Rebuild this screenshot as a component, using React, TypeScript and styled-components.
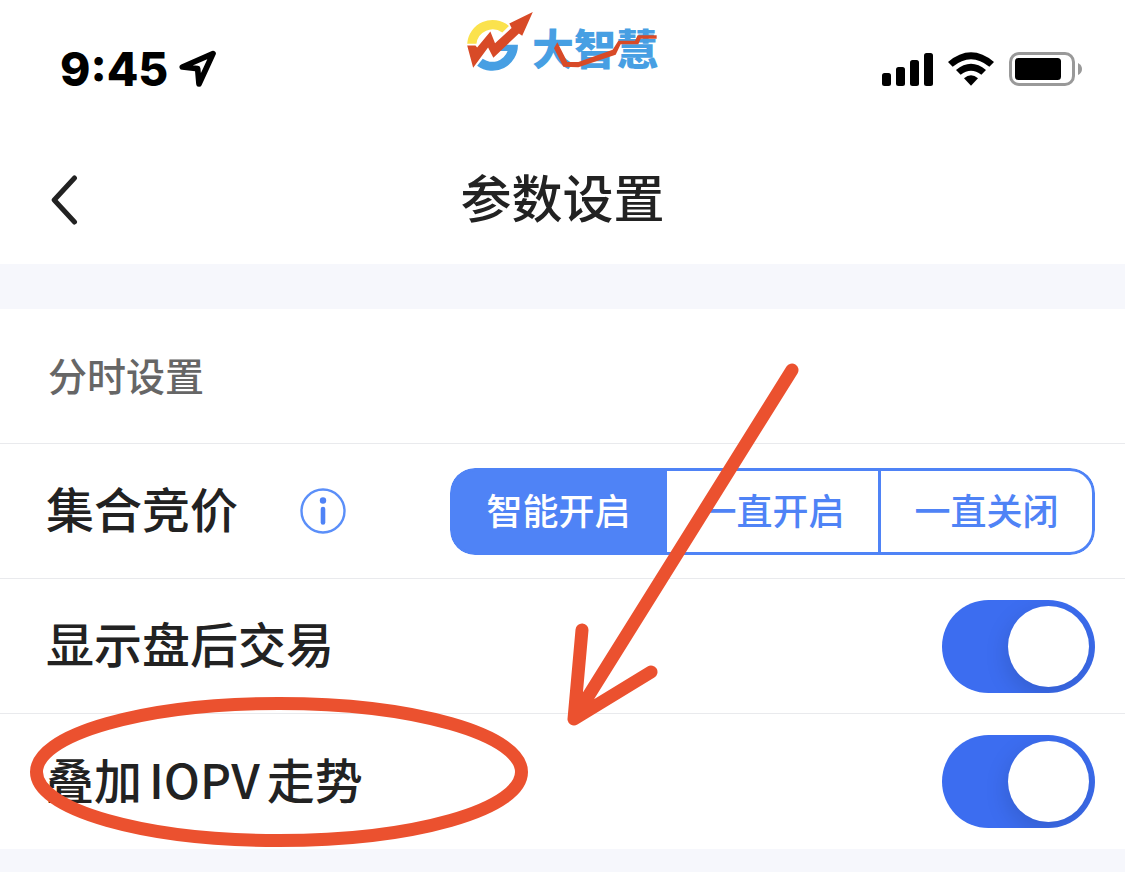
import React, { useState } from 'react';
import styled, { createGlobalStyle } from 'styled-components';

const GlobalStyle = createGlobalStyle`
  *, *::before, *::after { box-sizing: border-box; }
  body {
    margin: 0;
    background: #f6f7fc;
    color: #222;
    font-family: Inter, 'Noto Sans CJK SC', sans-serif;
  }
  button { margin: 0; padding: 0; border: 0; background: none; font: inherit; color: inherit; cursor: pointer; }
  svg { display: block; flex: none; }
`;

const cjk = `'Noto Sans CJK SC', sans-serif`;

const TopArea = styled.div`
  background: #fff;
`;

const StatusBar = styled.div`
  display: grid;
  grid-template-columns: 1fr auto 1fr;
  align-items: center;
  height: 138px;
`;

const StatusLeft = styled.div`
  display: flex;
  align-items: center;
  gap: 11px;
  padding-left: 60px;
`;

const Time = styled.time`
  font-size: 46px;
  line-height: 48px;
  font-weight: 800;
  color: #000;
`;

const StatusRight = styled.div`
  display: flex;
  align-items: center;
  justify-content: flex-end;
  gap: 15px;
  padding-right: 43px;
`;

const Logo = styled.div`
  display: flex;
  align-self: start;
  padding-top: 12px;
`;

const Wordmark = styled.span`
  position: relative;
  margin: 16px 0 0 -1px;
  font-family: ${cjk};
  font-size: 42px;
  line-height: 38px;
  font-weight: 900;
  color: #479fe3;
`;

const TrendLine = styled.svg`
  position: absolute;
  left: 0;
  top: 0;
`;

const Header = styled.header`
  display: grid;
  grid-template-columns: 1fr auto 1fr;
  align-items: center;
  height: 126px;
  padding: 0 50px 2px;
`;

const BackButton = styled.button`
  justify-self: start;
`;

const Title = styled.h1`
  margin: 0;
  padding-bottom: 8px;
  font-family: ${cjk};
  font-size: 51px;
  line-height: 60px;
  font-weight: 500;
`;

const Settings = styled.section`
  position: relative;
  margin-top: 45px;
  background: #fff;
`;

const Row = styled.div`
  display: flex;
  align-items: center;
  justify-content: space-between;
  height: 135px;
  padding: 0 30px 0 46px;
  border-bottom: 1px solid #e9eaed;
  &:last-of-type { border-bottom: 0; }
`;

const SectionTitle = styled.h2`
  margin: 0;
  padding: 0 0 4px 2px;
  font-family: ${cjk};
  font-size: 39px;
  line-height: 48px;
  font-weight: 500;
  color: #666;
`;

const LabelGroup = styled.div`
  display: flex;
  align-items: center;
  gap: 62px;
`;

const Label = styled.label`
  padding-bottom: 8px;
  font-family: ${cjk};
  font-size: 48px;
  line-height: 60px;
  font-weight: 500;
`;

const Latin = styled.span`
  margin: 0 7px;
`;

const Segments = styled.div`
  display: flex;
  width: 645px;
  height: 87px;
  border-radius: 25px;
  overflow: hidden;
`;

const Segment = styled.button<{ $active: boolean }>`
  flex: 1;
  padding-bottom: 4px;
  font-family: ${cjk};
  font-size: 36px;
  line-height: 48px;
  font-weight: 500;
  color: ${p => (p.$active ? '#fff' : '#4f83f6')};
  background: ${p => (p.$active ? '#4f83f6' : '#fff')};
  border: 3px solid #4f83f6;
  border-right-width: ${p => (p.$active ? '3px' : '0')};
  &:first-child { border-radius: 25px 0 0 25px; }
  &:last-child { border-right-width: 3px; border-radius: 0 25px 25px 0; }
  &[aria-pressed='true'] + & { border-left-width: 0; }
`;

const Switch = styled.input`
  appearance: none;
  flex: none;
  width: 153px;
  height: 93px;
  margin: 0;
  padding: 6px;
  border-radius: 47px;
  background: #c9ccd4;
  overflow: hidden;
  cursor: pointer;
  &::before {
    content: '';
    display: block;
    width: 81px;
    height: 81px;
    border-radius: 50%;
    background: #fff;
    box-shadow: 0 8px 24px rgba(0, 0, 0, 0.15);
  }
  &:checked { background: #3c6df0; }
  &:checked::before { margin-left: 60px; }
`;

const Markup = styled.svg`
  position: absolute;
  left: 0;
  top: 0;
  pointer-events: none;
`;

const options = ['智能开启', '一直开启', '一直关闭'];

function LogoMark() {
  return (
    <svg width="66" height="59" viewBox="54 36 198 178" aria-hidden="true">
      <path d="M54 132A77 77 0 0 1 180 78L160 98A49 49 0 0 0 82 132Z" fill="#fbe24d" />
      <path d="M158 135H207A77 77 0 0 1 84 198L101 177A49 49 0 0 0 176 154H139Z" fill="#479fe3" />
      <path d="M54 137H79L84 143L124 95L138 130L188 84L181 71L252 36L220 108L210 101L133 174L117 143L72 204Z" fill="#d84a27" />
    </svg>
  );
}

function LocationIcon() {
  return (
    <svg width="38" height="38" viewBox="417 61 114 114" aria-hidden="true">
      <path d="M519 72L427 112L473 117L477 163Z" fill="none" stroke="#000" strokeWidth="17" strokeLinejoin="round" />
    </svg>
  );
}

function SignalIcon() {
  return (
    <svg width="51" height="33" viewBox="0 0 51 33" aria-hidden="true">
      <rect x="0" y="20" width="9" height="13" rx="2.5" />
      <rect x="14" y="14" width="9" height="19" rx="2.5" />
      <rect x="28" y="7" width="9" height="26" rx="2.5" />
      <rect x="42" y="0" width="9" height="33" rx="2.5" />
    </svg>
  );
}

function WifiIcon() {
  return (
    <svg width="46" height="34" viewBox="234 50 138 102" aria-hidden="true">
      <path d="M234 80Q303 22 372 80L358 94Q303 49 248 94Z" />
      <path d="M258 104Q303 67 348 104L334 118Q303 94 272 118Z" />
      <path d="M282 129Q303 111 324 129L303 151Z" />
    </svg>
  );
}

function BatteryIcon() {
  return (
    <svg width="73" height="34" viewBox="0 0 73 34" aria-hidden="true">
      <rect x="1.5" y="1.5" width="63" height="31" rx="8.5" fill="none" stroke="#999" strokeWidth="3" />
      <rect x="6" y="6" width="46" height="22" rx="3.5" />
      <path d="M69 11Q73 13 73 17T69 23Z" fill="#999" />
    </svg>
  );
}

export default function App() {
  const [mode, setMode] = useState(0);
  return (
    <>
      <GlobalStyle />
      <TopArea>
        <StatusBar>
          <StatusLeft>
            <Time>9:45</Time>
            <LocationIcon />
          </StatusLeft>
          <Logo>
            <LogoMark />
            <Wordmark>
              大智慧
              <TrendLine width="126" height="42" viewBox="246 84 378 126" aria-hidden="true">
                <path
                  d="M322 127L312 145L340 200L385 202L497 164L512 133H565L572 116H620V106H563L555 122H505L488 149L385 186H352Z"
                  fill="#d84a27"
                />
              </TrendLine>
            </Wordmark>
          </Logo>
          <StatusRight>
            <SignalIcon />
            <WifiIcon />
            <BatteryIcon />
          </StatusRight>
        </StatusBar>
        <Header>
          <BackButton aria-label="返回">
            <svg width="28" height="50" viewBox="0 0 28 50" fill="none" stroke="#222" strokeWidth="5" strokeLinecap="round" strokeLinejoin="round">
              <path d="M24.5 3L4.2 25L24.5 47" />
            </svg>
          </BackButton>
          <Title>参数设置</Title>
        </Header>
      </TopArea>
      <Settings>
        <Row>
          <SectionTitle>分时设置</SectionTitle>
        </Row>
        <Row>
          <LabelGroup>
            <Label as="span" id="auction">集合竞价</Label>
            <button aria-label="说明">
              <svg width="46" height="46" viewBox="0 0 46 46" aria-hidden="true">
                <circle cx="23" cy="23" r="21.5" fill="none" stroke="#5b8ff9" strokeWidth="2.4" />
                <circle cx="23" cy="12.5" r="3.2" fill="#4f83f6" />
                <path d="M23 21V34.5" stroke="#4f83f6" strokeWidth="4.6" strokeLinecap="round" />
              </svg>
            </button>
          </LabelGroup>
          <Segments role="group" aria-labelledby="auction">
            {options.map((text, i) => (
              <Segment key={text} $active={i === mode} aria-pressed={i === mode} onClick={() => setMode(i)}>
                {text}
              </Segment>
            ))}
          </Segments>
        </Row>
        <Row>
          <Label htmlFor="after-hours">显示盘后交易</Label>
          <Switch id="after-hours" type="checkbox" role="switch" defaultChecked />
        </Row>
        <Row>
          <Label htmlFor="iopv">叠加<Latin>IOPV</Latin>走势</Label>
          <Switch id="iopv" type="checkbox" role="switch" defaultChecked />
        </Row>
        <Markup width="830" height="540" viewBox="0 0 830 540" fill="none" stroke="#eb512f" strokeWidth="13" strokeLinecap="round" strokeLinejoin="round" aria-hidden="true">
          <path d="M792 61L574 410M582 321L574 410L651 363" />
          <ellipse cx="279" cy="463" rx="242.5" ry="68.5" />
        </Markup>
      </Settings>
    </>
  );
}
